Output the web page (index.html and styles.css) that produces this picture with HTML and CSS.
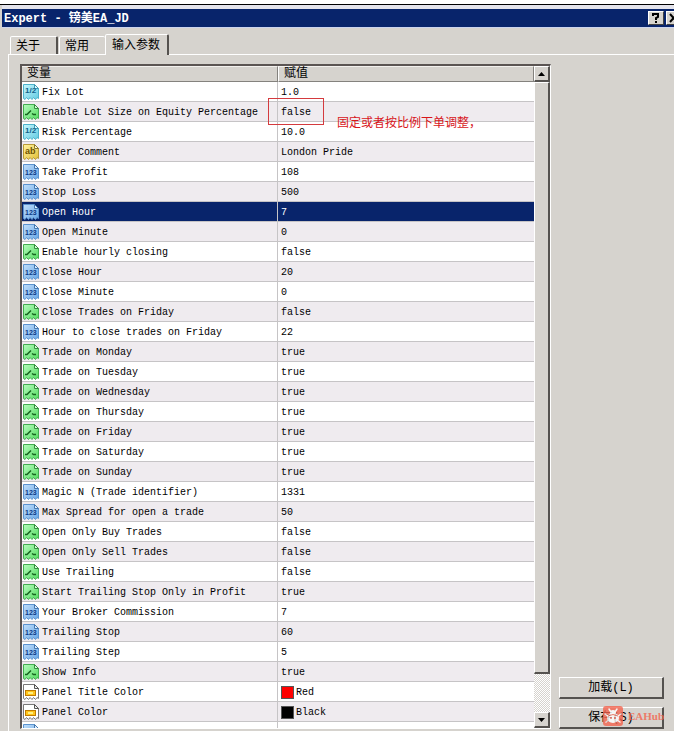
FILE: index.html
```html
<!DOCTYPE html>
<html lang="zh-CN">
<head>
<meta charset="utf-8">
<meta name="viewport" content="width=device-width, initial-scale=1">
<title>Expert - 镑美EA_JD</title>
<link rel="stylesheet" href="styles.css">
</head>
<body>
<svg class="sprite" aria-hidden="true">
  <defs>
    <linearGradient id="g-cyan" x2="1" y2="1"><stop stop-color="#c6f6fd"/><stop offset="1" stop-color="#62cbe2"/></linearGradient>
    <linearGradient id="g-green" x2="1" y2="1"><stop stop-color="#b4fbbb"/><stop offset="1" stop-color="#55dc62"/></linearGradient>
    <linearGradient id="g-blue" x2="1" y2="1"><stop stop-color="#c0defa"/><stop offset="1" stop-color="#68a6e6"/></linearGradient>
    <linearGradient id="g-gold" x2="1" y2="1"><stop stop-color="#fff3a0"/><stop offset="1" stop-color="#e2bf38"/></linearGradient>
    <path id="sheet" d="M.5 .5H11.5L15.5 4.5V14.5L14 13.5L12.5 15.5L10.5 13.5L9 15.5L7 13.5L5.5 15.5L3.5 13.5L2 15.5L.5 14.5Z"/>
    <path id="fold" d="M11.5 .5V4.5H15.5Z"/>
  </defs>
  <symbol id="i-double" viewBox="0 0 16 16">
    <use href="#sheet" fill="url(#g-cyan)" stroke="#4db3cb"/><use href="#fold" fill="#dffaff" stroke="#4099b1"/>
  </symbol>
  <symbol id="i-bool" viewBox="0 0 16 16">
    <use href="#sheet" fill="url(#g-green)" stroke="#43ad50"/><use href="#fold" fill="#d0ffd2" stroke="#378c41"/>
    <path d="M2 10.5H4L8 6.5M9 9.5L10.5 10.5H13" fill="none" stroke="#15651e" stroke-width="1.5"/>
  </symbol>
  <symbol id="i-int" viewBox="0 0 16 16">
    <use href="#sheet" fill="url(#g-blue)" stroke="#5b93cf"/><use href="#fold" fill="#dcecff" stroke="#4679af"/>
  </symbol>
  <symbol id="i-string" viewBox="0 0 16 16">
    <use href="#sheet" fill="url(#g-gold)" stroke="#b79a35"/><use href="#fold" fill="#fff9ca" stroke="#8d772b"/>
  </symbol>
  <symbol id="i-color" viewBox="0 0 16 16">
    <use href="#sheet" fill="#fff" stroke="#777"/><use href="#fold" fill="#eee" stroke="#555"/>
    <rect x="2.5" y="6.5" width="10" height="5" fill="#ffc51c" stroke="#c07c00"/><rect x="5" y="8" width="5" height="2" fill="#fff080"/>
  </symbol>
</svg>

<main class="window">
  <header class="titlebar">
    <h1>Expert - 镑美EA_JD</h1>
    <div class="caption-buttons">
      <button type="button" aria-label="帮助"><svg width="10" height="10" viewBox="0 0 10 10"><path d="M2 3V1H7V4L5 5V7M5 8V10" fill="none" stroke="#000" stroke-width="2"/></svg></button>
      <button type="button" aria-label="关闭"><svg width="10" height="10" viewBox="0 0 10 10"><path d="M1 1L8 9M8 1L1 9" stroke="#000" stroke-width="2"/></svg></button>
    </div>
  </header>

  <nav class="tabs" role="tablist">
    <button type="button" role="tab" class="tab">关于</button>
    <button type="button" role="tab" class="tab">常用</button>
    <button type="button" role="tab" class="tab tab-active" aria-selected="true">输入参数</button>
  </nav>

  <section class="panel">
    <div class="list">
      <div class="viewport">
        <table>
          <colgroup><col class="col-name"><col></colgroup>
          <thead><tr><th>变量</th><th>赋值</th></tr></thead>
          <tbody>
            <tr><td><span class="icon double"><svg><use href="#i-double"/></svg><b>1/2</b></span>Fix Lot</td><td>1.0</td></tr>
            <tr><td><span class="icon"><svg><use href="#i-bool"/></svg></span>Enable Lot Size on Equity Percentage</td><td class="marked">false<span class="mark-box"></span><span class="mark-note">固定或者按比例下单调整，</span></td></tr>
            <tr><td><span class="icon double"><svg><use href="#i-double"/></svg><b>1/2</b></span>Risk Percentage</td><td>10.0</td></tr>
            <tr><td><span class="icon string"><svg><use href="#i-string"/></svg><b>ab</b></span>Order Comment</td><td>London Pride</td></tr>
            <tr><td><span class="icon int"><svg><use href="#i-int"/></svg><b>123</b></span>Take Profit</td><td>108</td></tr>
            <tr><td><span class="icon int"><svg><use href="#i-int"/></svg><b>123</b></span>Stop Loss</td><td>500</td></tr>
            <tr class="selected"><td><span class="icon int"><svg><use href="#i-int"/></svg><b>123</b></span>Open Hour</td><td>7</td></tr>
            <tr><td><span class="icon int"><svg><use href="#i-int"/></svg><b>123</b></span>Open Minute</td><td>0</td></tr>
            <tr><td><span class="icon"><svg><use href="#i-bool"/></svg></span>Enable hourly closing</td><td>false</td></tr>
            <tr><td><span class="icon int"><svg><use href="#i-int"/></svg><b>123</b></span>Close Hour</td><td>20</td></tr>
            <tr><td><span class="icon int"><svg><use href="#i-int"/></svg><b>123</b></span>Close Minute</td><td>0</td></tr>
            <tr><td><span class="icon"><svg><use href="#i-bool"/></svg></span>Close Trades on Friday</td><td>false</td></tr>
            <tr><td><span class="icon int"><svg><use href="#i-int"/></svg><b>123</b></span>Hour to close trades on Friday</td><td>22</td></tr>
            <tr><td><span class="icon"><svg><use href="#i-bool"/></svg></span>Trade on Monday</td><td>true</td></tr>
            <tr><td><span class="icon"><svg><use href="#i-bool"/></svg></span>Trade on Tuesday</td><td>true</td></tr>
            <tr><td><span class="icon"><svg><use href="#i-bool"/></svg></span>Trade on Wednesday</td><td>true</td></tr>
            <tr><td><span class="icon"><svg><use href="#i-bool"/></svg></span>Trade on Thursday</td><td>true</td></tr>
            <tr><td><span class="icon"><svg><use href="#i-bool"/></svg></span>Trade on Friday</td><td>true</td></tr>
            <tr><td><span class="icon"><svg><use href="#i-bool"/></svg></span>Trade on Saturday</td><td>true</td></tr>
            <tr><td><span class="icon"><svg><use href="#i-bool"/></svg></span>Trade on Sunday</td><td>true</td></tr>
            <tr><td><span class="icon int"><svg><use href="#i-int"/></svg><b>123</b></span>Magic N (Trade identifier)</td><td>1331</td></tr>
            <tr><td><span class="icon int"><svg><use href="#i-int"/></svg><b>123</b></span>Max Spread for open a trade</td><td>50</td></tr>
            <tr><td><span class="icon"><svg><use href="#i-bool"/></svg></span>Open Only Buy Trades</td><td>false</td></tr>
            <tr><td><span class="icon"><svg><use href="#i-bool"/></svg></span>Open Only Sell Trades</td><td>false</td></tr>
            <tr><td><span class="icon"><svg><use href="#i-bool"/></svg></span>Use Trailing</td><td>false</td></tr>
            <tr><td><span class="icon"><svg><use href="#i-bool"/></svg></span>Start Trailing Stop Only in Profit</td><td>true</td></tr>
            <tr><td><span class="icon int"><svg><use href="#i-int"/></svg><b>123</b></span>Your Broker Commission</td><td>7</td></tr>
            <tr><td><span class="icon int"><svg><use href="#i-int"/></svg><b>123</b></span>Trailing Stop</td><td>60</td></tr>
            <tr><td><span class="icon int"><svg><use href="#i-int"/></svg><b>123</b></span>Trailing Step</td><td>5</td></tr>
            <tr><td><span class="icon"><svg><use href="#i-bool"/></svg></span>Show Info</td><td>true</td></tr>
            <tr><td><span class="icon"><svg><use href="#i-color"/></svg></span>Panel Title Color</td><td><span class="swatch red"></span>Red</td></tr>
            <tr><td><span class="icon"><svg><use href="#i-color"/></svg></span>Panel Color</td><td><span class="swatch black"></span>Black</td></tr>
            <tr><td><span class="icon"><svg><use href="#i-int"/></svg></span></td><td></td></tr>
          </tbody>
        </table>
      </div>
      <div class="scrollbar">
        <button type="button" class="arrow" aria-label="向上"><svg width="7" height="4" viewBox="0 0 7 4"><path d="M0 4L3.5 0L7 4Z"/></svg></button>
        <div class="track"><div class="thumb"></div></div>
        <button type="button" class="arrow" aria-label="向下"><svg width="7" height="4" viewBox="0 0 7 4"><path d="M0 0L3.5 4L7 0Z"/></svg></button>
      </div>
    </div>

    <aside class="actions">
      <button type="button">加载(L)</button>
      <div class="save">
        <button type="button">保存(S)</button>
        <div class="brand">
          <svg width="20" height="20" viewBox="0 0 20 20">
            <rect width="20" height="20" rx="3" fill="#f3654f"/>
            <path d="M6 3L8 6M14 3L12 6M2 8L5 10M18 8L15 10M3 16L6 14M17 16L14 14" stroke="#fff" stroke-width="1.5" stroke-linecap="round"/>
            <ellipse cx="10" cy="12" rx="6" ry="5" fill="#fff"/><circle cx="10" cy="7" r="3" fill="#fff"/>
            <path d="M5 10Q10 7 15 10" fill="none" stroke="#f3654f"/><circle cx="8" cy="12" r="1" fill="#f3654f"/><circle cx="12" cy="12" r="1" fill="#f3654f"/>
          </svg>
          <span>EAHub</span>
        </div>
      </div>
    </aside>
  </section>
</main>
</body>
</html>
```

FILE: styles.css
```css
* { box-sizing: border-box; }

body {
  margin: 0;
  padding-top: 4px;
  height: 100vh;
  background: #fff;
  color: #000;
  font: 10px/12px "Liberation Mono", "Noto Sans CJK SC", monospace;
  overflow: hidden;
}

button {
  margin: 0;
  padding: 0;
  border: 0;
  border-radius: 0;
  background: #d6d3ce;
  color: #000;
  font: inherit;
}

.sprite { position: absolute; width: 0; height: 0; }

.window {
  display: flex;
  flex-direction: column;
  height: 100%;
  border-top: 1px solid #000;
  background: #d6d3ce;
}

.titlebar {
  display: flex;
  align-items: center;
  justify-content: space-between;
  height: 23px;
  margin-left: 2px;
  border-top: 4px solid #e4e4ec;
  border-bottom: 1px solid #cbd4ee;
  background: #08246b;
  color: #fff;
  overflow: hidden;
}

.titlebar h1 { margin: 0; padding: 2px 0 0 2px; font-size: 12px; line-height: 16px; white-space: nowrap; }

.caption-buttons { display: flex; gap: 2px; margin-right: -8px; }

.caption-buttons button {
  display: grid;
  place-items: center;
  width: 16px;
  height: 14px;
  border: 1px solid;
  border-color: #fff #424142 #424142 #fff;
}

.tabs {
  display: flex;
  align-items: flex-end;
  height: 27px;
  margin-left: 8px;
  padding-left: 2px;
  border-bottom: 1px solid #fff;
}

.tab {
  height: 18px;
  padding: 3px 16px 0 5px;
  border: solid;
  border-width: 1px 2px 0 1px;
  border-color: #fff #55524f transparent #fff;
  border-radius: 2px 2px 0 0;
  font-size: 12px;
  line-height: 14px;
  white-space: nowrap;
}

.tab + .tab { margin-left: 1px; border-right-width: 0; }

.tab.tab-active {
  height: 21px;
  margin: 0 0 -1px;
  padding: 2px 7px 0 6px;
  border-right-width: 2px;
}

.panel {
  display: grid;
  grid-template-columns: minmax(0, 1fr) 105px;
  gap: 8px;
  flex: 1;
  min-height: 0;
  margin-left: 8px;
  padding: 9px 10px 2px 11px;
  border-left: 1px solid #fff;
}

.list {
  display: flex;
  min-height: 0;
  border: solid;
  border-width: 2px 1px 1px 2px;
  border-color: #5b5553 #fff #fff #5b5553;
  background: #fff;
}

.viewport { flex: 1; min-width: 0; overflow: hidden; }

table { width: 100%; table-layout: fixed; border-collapse: separate; border-spacing: 0; }

.col-name { width: 50%; }

th {
  height: 16px;
  padding: 1px 5px 0;
  border: solid;
  border-width: 1px 1px 1px 0;
  border-color: #f3f1ee #84827e #84827e #fff;
  background: #d6d3ce;
  font-size: 12px;
  font-weight: normal;
  line-height: 13px;
  text-align: left;
}

th + th { border-left-width: 1px; }

td {
  height: 20px;
  padding: 2px 3px 0;
  border-bottom: 1px solid #c6c4c6;
  white-space: nowrap;
  vertical-align: middle;
}

td:first-child { padding: 0 0 0 1px; border-right: 1px solid #c6c4c6; }

tbody tr:nth-child(even) { background: #efebef; }
tbody tr.selected { background: #08246b; color: #fff; }

.icon {
  display: inline-grid;
  width: 16px;
  height: 16px;
  margin-right: 3px;
  vertical-align: middle;
}

.icon svg, .icon b { grid-area: 1 / 1; }
.icon svg { width: 16px; height: 16px; }
.icon b {
  padding-left: 2px;
  font-family: "Liberation Sans", sans-serif;
}
.double b { color: #12618a; font-size: 8px; line-height: 14px; }
.int b { color: #0c3a85; font-size: 7px; line-height: 17px; }
.string b { color: #6d5200; font-size: 9px; line-height: 15px; }

.swatch {
  display: inline-block;
  width: 13px;
  height: 13px;
  margin-right: 2px;
  border: 1px solid #555;
  vertical-align: middle;
}
.red { background: #f00; }
.black { background: #000; }

.marked { position: relative; }
.mark-box {
  position: absolute;
  top: -4px;
  left: -10px;
  width: 56px;
  height: 27px;
  border: 1px solid #d43a3e;
}
.mark-note {
  position: absolute;
  top: 14px;
  left: 59px;
  color: #d8151b;
  font-size: 12px;
  line-height: 16px;
}

.scrollbar { display: flex; flex-direction: column; width: 16px; }

.arrow, .thumb {
  border: solid;
  border-width: 1px 2px 2px 1px;
  border-color: #fff #55524f #55524f #fff;
  background: #d6d3ce;
}

.arrow { display: grid; place-items: center; height: 16px; flex: none; }

.track {
  flex: 1;
  background: repeating-conic-gradient(#d6d3ce 0 25%, #fff 0 50%) 0 0 / 2px 2px;
}

.thumb { height: 94%; }

.actions {
  display: flex;
  flex-direction: column;
  justify-content: flex-end;
  gap: 8px;
}

.actions button {
  width: 100%;
  height: 22px;
  border: solid;
  border-width: 1px 2px 2px 1px;
  border-color: #fff #55524f #55524f #fff;
  font-size: 12px;
}

.save { position: relative; height: 22px; }

.brand {
  position: absolute;
  top: -1px;
  right: 0;
  display: flex;
  align-items: center;
  gap: 5px;
  color: #f3654f;
  font: bold 11px/20px "Liberation Serif", serif;
  opacity: 0.8;
}
```
